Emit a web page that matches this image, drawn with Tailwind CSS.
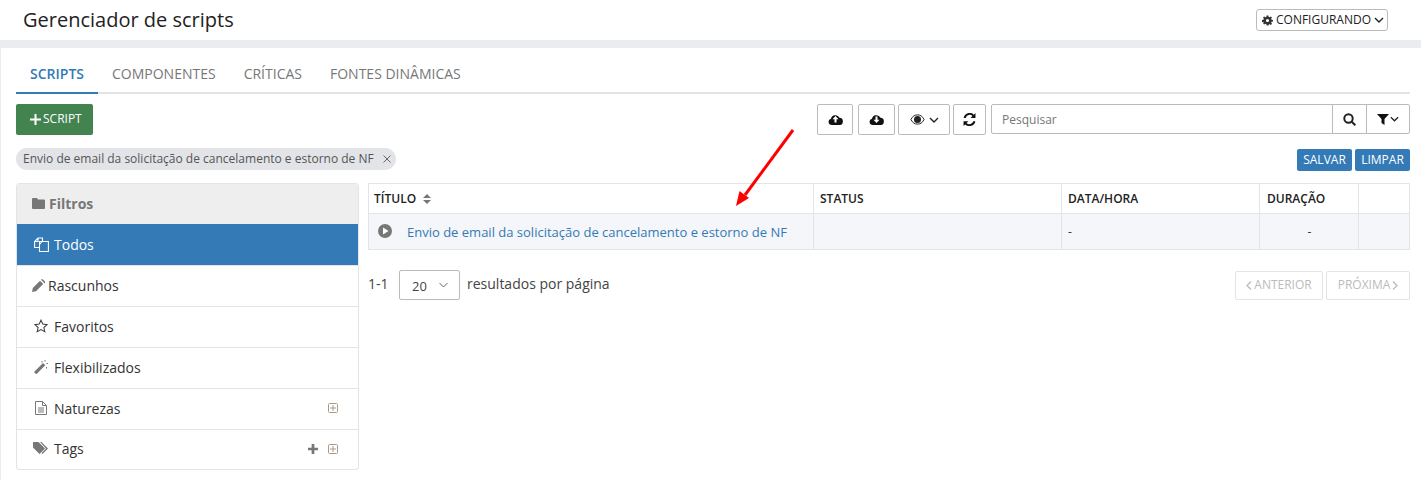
<!DOCTYPE html>
<html lang="en">
  <head>
    <meta charset="UTF-8" />
    <script src="https://cdn.jsdelivr.net/npm/@tailwindcss/browser@4"></script>
    <title>Gerenciador de scripts</title>
  </head>
  <body class="bg-[#ebecf0] font-['Open_Sans',sans-serif] text-[#333]">
    <div class="relative w-[1421px] h-[480px] overflow-hidden">
      <!-- header -->
      <header class="h-[40px] bg-white flex items-center justify-between pl-[23px] pr-[33px]">
        <h1 class="text-[20px] leading-[40px] text-[#222]">Gerenciador de scripts</h1>
        <button class="h-[22px] w-[132px] pl-[5px] flex items-center gap-[3px] border border-[#bbb] rounded-[3px] text-[12px] text-[#222] bg-white">
          <svg class="w-[11px] h-[11px]" viewBox="0 0 24 24" fill="#333"><path d="M10 1h4l.6 3.2 2 .8L19.300 3.200l2.500 2.500L20 8.400l.8 2L24 11v3l-3.200.6-.8 2 1.800 2.700-2.500 2.500-2.700-1.800-2 .8L14 23h-4l-.6-3.200-2-.8-2.700 1.800-2.500-2.500L4 17.600l-.8-2L0 15v-4l3.200-.6.8-2-1.800-2.700 2.500-2.500L7.400 5l2-.8zM12 8.500a3.500 3.500 0 1 0 0 7 3.500 3.500 0 0 0 0-7z" fill-rule="evenodd"/></svg>
          <span>CONFIGURANDO</span>
          <svg class="w-[10px] h-[10px]" viewBox="0 0 10 10" fill="none" stroke="#222" stroke-width="1.400"><path d="M1 3l4 4 4-4"/></svg>
        </button>
      </header>

      <main class="mt-[8px] ml-[1px] h-[432px] bg-white pl-[15px] pr-[11px]">
        <!-- tabs -->
        <nav class="h-[46px] flex border-b-2 border-[#e3e3e8] text-[14px] leading-[52px]">
          <a class="h-[46px] w-[82px] text-center text-[#337ab7] font-semibold border-b-2 border-[#337ab7]">SCRIPTS</a>
          <a class="ml-[14px] text-[#777]">COMPONENTES</a>
          <a class="ml-[28px] text-[#777]">CRÍTICAS</a>
          <a class="ml-[28px] text-[#777]">FONTES DINÂMICAS</a>
        </nav>

        <!-- toolbar -->
        <div class="mt-[10px] h-[31px] flex justify-between">
          <button class="w-[77px] h-[31px] pl-[14px] pb-[1px] bg-[#428350] rounded-[2px] text-white text-[12px] flex items-center gap-[2px]">
            <svg class="w-[11px] h-[11px]" viewBox="0 0 11 11" fill="white"><path d="M4.500 0h2v4.500H11v2H6.500V11h-2V6.500H0v-2h4.500z"/></svg>
            SCRIPT
          </button>
          <div class="flex">
            <button class="w-[36px] h-[31px] pb-[1px] border border-[#bbb] rounded-[2px] flex items-center justify-center">
              <svg class="w-[15px] h-[12px]" viewBox="0 0 14 12"><path d="M3.300 12A3.200 3.200 0 0 1 2.500 5.700 4.500 4.500 0 0 1 11 4.800 3.600 3.600 0 0 1 10.500 12z" fill="#111"/><path d="M7 3l3 3.200H8V9.500H6V6.200H4z" fill="white"/></svg>
            </button>
            <button class="ml-[5px] w-[37px] h-[31px] pb-[1px] border border-[#bbb] rounded-[2px] flex items-center justify-center">
              <svg class="w-[15px] h-[12px]" viewBox="0 0 14 12"><path d="M3.300 12A3.200 3.200 0 0 1 2.500 5.700 4.500 4.500 0 0 1 11 4.800 3.600 3.600 0 0 1 10.500 12z" fill="#111"/><path d="M7 10l3-3.200H8V3.500H6v3.300H4z" fill="white"/></svg>
            </button>
            <button class="ml-[3px] w-[52px] h-[31px] border border-[#bbb] rounded-[2px] flex items-center justify-center gap-[4px]">
              <svg class="w-[15px] h-[11px]" viewBox="0 0 13 10"><path d="M.5 5C2 2 4 .8 6.500.8S11 2 12.500 5C11 8 9 9.200 6.500 9.200S2 8 .5 5z" fill="none" stroke="#222" stroke-width=".9"/><circle cx="6.500" cy="5" r="3.200" fill="#222"/></svg>
              <svg class="w-[10px] h-[8px]" viewBox="0 0 10 8" fill="none" stroke="#222" stroke-width="1.400"><path d="M1 2l4 4 4-4"/></svg>
            </button>
            <button class="ml-[3px] w-[33px] h-[31px] border border-[#bbb] rounded-[2px] flex items-center justify-center">
              <svg class="w-[13px] h-[13px]" viewBox="0 0 12 12" fill="#111"><path d="M11.500 0v4.500H7l1.700-1.700A3.700 3.700 0 0 0 2.500 4.500H.6A5.600 5.600 0 0 1 10 1.500zM.5 12V7.500H5L3.300 9.200a3.700 3.700 0 0 0 6.200-1.700h1.900A5.600 5.600 0 0 1 2 10.500z"/></svg>
            </button>
            <div class="ml-[5px] w-[419px] h-[30px] border border-[#bbb] rounded-[2px] flex">
              <span class="flex-1 pl-[10px] text-[12px] leading-[29px] text-[#777]">Pesquisar</span>
              <span class="w-[34px] border-l border-[#bbb] flex items-center justify-center">
                <svg class="w-[13px] h-[13px]" viewBox="0 0 13 13" fill="none" stroke="#222" stroke-width="2"><circle cx="5.500" cy="5.500" r="4.200"/><path d="M8.500 8.500l3.800 3.800"/></svg>
              </span>
              <span class="w-[43px] border-l border-[#bbb] flex items-center justify-center gap-[1px]">
                <svg class="w-[12px] h-[12px]" viewBox="0 0 12 12" fill="#111"><path d="M0 1h12L7.500 6v6l-3-2V6z"/></svg>
                <svg class="w-[9px] h-[8px]" viewBox="0 0 10 8" fill="none" stroke="#222" stroke-width="1.400"><path d="M1 2l4 4 4-4"/></svg>
              </span>
            </div>
          </div>
        </div>

        <!-- chip and saved filter buttons -->
        <div class="mt-[13px] h-[22px] flex justify-between">
          <span class="h-[22px] w-[380px] rounded-full bg-[#e3e4e8] pl-[7px] flex items-center text-[12px] text-[#555] whitespace-nowrap">
            Envio de email da solicitação de cancelamento e estorno de NF
            <svg class="ml-[9px] w-[8px] h-[8px]" viewBox="0 0 8 8" stroke="#666" stroke-width="1"><path d="M.5.500l7 7M7.500.500l-7 7"/></svg>
          </span>
          <div class="mt-[1px] flex gap-[3px] text-[12px] text-white">
            <button class="w-[55px] h-[22px] bg-[#337ab7] rounded-[2px]">SALVAR</button>
            <button class="w-[55px] h-[22px] bg-[#337ab7] rounded-[2px]">LIMPAR</button>
          </div>
        </div>

        <div class="mt-[13px] flex items-start">
          <!-- filters panel -->
          <aside class="w-[343px] h-[287px] border border-[#e3e3e8] border-t-0 rounded-[4px] overflow-hidden text-[14px] text-[#333]">
            <div class="h-[41px] bg-[#eee] border-t border-[#e3e3e8] pl-[15px] pb-[2px] flex items-center gap-[4px] font-bold text-[#777]">
              <svg class="w-[13px] h-[11px]" viewBox="0 0 13 11" fill="#777"><path d="M1 0h4l1 1.500h6a1 1 0 0 1 1 1V10a1 1 0 0 1-1 1H1a1 1 0 0 1-1-1V1a1 1 0 0 1 1-1z"/></svg>
              Filtros
            </div>
            <div class="h-[42px] bg-[#337ab7] border-b border-[#e3e3e8] pl-[17px] flex items-center gap-[5px] text-white">
              <svg class="w-[15px] h-[15px]" viewBox="0 0 15 15" fill="none" stroke="white" stroke-width="1.100"><path d="M5 10.500H.6V4.500L4 1h4.500v3.500M4 1v3.500H.6M5.500 4.500H10l4.400 0v10H5.500zM8 4.500L5.500 7.500"/></svg>
              Todos
            </div>
            <div class="h-[41px] border-b border-[#e3e3e8] pl-[15px] pb-[2px] flex items-center gap-[3px]">
              <svg class="w-[13px] h-[13px]" viewBox="0 0 13 13" fill="#777"><path d="M0 13l.8-4L8 1.800 11.200 5 4 12.200zM9 .8l.6-.6h1l2.800 2.800v1l-.6.6z"/></svg>
              Rascunhos
            </div>
            <div class="h-[41px] border-b border-[#e3e3e8] pl-[17px] pb-[2px] flex items-center gap-[6px]">
              <svg class="w-[14px] h-[14px]" viewBox="0 0 14 14" fill="none" stroke="#444" stroke-width="1.100"><path d="M7 1.200l1.800 3.900 4.200.5-3.100 2.900.9 4.200L7 10.600l-3.800 2.100.9-4.200L1 5.600l4.200-.5z"/></svg>
              Favoritos
            </div>
            <div class="h-[41px] border-b border-[#e3e3e8] pl-[17px] pb-[2px] flex items-center gap-[6px]">
              <svg class="w-[14px] h-[14px]" viewBox="0 0 14 14" fill="#777"><path d="M0 12l9-9 2.300 2.300-9 9zM10.500 0h1v1.500h-1zM12.500 3h1.500v1h-1.500zM7.500 1h1v1.500h-1zM12 7h1v1.500h-1z"/></svg>
              Flexibilizados
            </div>
            <div class="h-[41px] border-b border-[#e3e3e8] pl-[18px] pr-[20px] pb-[2px] flex items-center gap-[7px]">
              <svg class="w-[12px] h-[14px]" viewBox="0 0 12 14" fill="none" stroke="#777"><path d="M.5.500h7l4 4v9H.5zM7.500.500v4h4M3 7h6M3 9h6M3 11h6"/></svg>
              <span class="flex-1">Naturezas</span>
              <svg class="w-[10px] h-[10px]" viewBox="0 0 10 10" fill="none" stroke="#a98"><rect x=".5" y=".5" width="9" height="9" rx="1"/><path d="M5 2v6M2 5h6"/></svg>
            </div>
            <div class="h-[40px] pl-[16px] pr-[20px] pb-[3px] flex items-center gap-[5px]">
              <svg class="w-[16px] h-[13px]" viewBox="0 0 16 13" fill="#777"><path d="M0 0h5.500L12 6.500 6.500 12 0 5.500zM7 0h1.500L15 6.500 9.500 12 8.500 11l4.500-4.500z"/></svg>
              <span class="flex-1">Tags</span>
              <svg class="mr-[5px] w-[10px] h-[10px]" viewBox="0 0 11 11" fill="#777"><path d="M4 0h3v4h4v3H7v4H4V7H0V4h4z"/></svg>
              <svg class="w-[10px] h-[10px]" viewBox="0 0 10 10" fill="none" stroke="#a98"><rect x=".5" y=".5" width="9" height="9" rx="1"/><path d="M5 2v6M2 5h6"/></svg>
            </div>
          </aside>

          <!-- results -->
          <section class="ml-[9px] w-[1042px] text-[12px]">
            <table class="w-full table-fixed border-collapse">
              <thead>
                <tr class="h-[30px] text-left text-[#222]">
                  <th class="w-[445px] border border-[#e3e3e8] pl-[5px] font-semibold">
                    <span class="inline-flex items-center gap-[7px]">TÍTULO
                      <svg class="w-[8px] h-[10px]" viewBox="0 0 8 10" fill="#777"><path d="M4 0l4 4H0zM4 10L0 6h8z"/></svg>
                    </span>
                  </th>
                  <th class="w-[248px] border border-[#e3e3e8] pl-[6px] font-semibold">STATUS</th>
                  <th class="w-[198px] border border-[#e3e3e8] pl-[6px] font-semibold">DATA/HORA</th>
                  <th class="w-[99px] border border-[#e3e3e8] pl-[7px] font-semibold">DURAÇÃO</th>
                  <th class="border border-[#e3e3e8]"></th>
                </tr>
              </thead>
              <tbody>
                <tr class="h-[36px] bg-[#f5f6f9]">
                  <td class="border border-[#e3e3e8] pl-[9px]">
                    <span class="flex items-center gap-[15px]">
                      <svg class="w-[14px] h-[14px] mb-[2px]" viewBox="0 0 14 14"><circle cx="7" cy="7" r="7" fill="#777"/><path d="M5 3.500L10.500 7 5 10.500z" fill="white"/></svg>
                      <a class="pt-[2px] text-[13px] text-[#337ab7] whitespace-nowrap">Envio de email da solicitação de cancelamento e estorno de NF</a>
                    </span>
                  </td>
                  <td class="border border-[#e3e3e8]"></td>
                  <td class="border border-[#e3e3e8] pl-[6px]">-</td>
                  <td class="border border-[#e3e3e8] pl-[1px] text-center">-</td>
                  <td class="border border-[#e3e3e8]"></td>
                </tr>
              </tbody>
            </table>

            <div class="mt-[20px] flex items-center justify-between">
              <div class="flex items-center text-[14px] text-[#444]">
                <span class="w-[31px] pb-[4px]">1-1</span>
                <span class="w-[61px] h-[30px] border border-[#bbb] rounded-[2px] pl-[12px] flex items-center gap-[12px] text-[13px]">
                  <span class="pt-[3px]">20</span>
                  <svg class="w-[9px] h-[6px]" viewBox="0 0 9 6" fill="none" stroke="#666"><path d="M.5 1l4 4 4-4"/></svg>
                </span>
                <span class="ml-[7px] pb-[4px]">resultados por página</span>
              </div>
              <div class="flex gap-[3px] text-[12px] text-[#bbb]">
                <button class="w-[88px] h-[29px] border border-[#e3e3e8] rounded-[2px] flex items-center justify-center gap-[2px]">
                  <svg class="w-[6px] h-[9px]" viewBox="0 0 6 9" fill="none" stroke="#bbb" stroke-width="1.300"><path d="M5 .5l-4 4 4 4"/></svg>
                  ANTERIOR
                </button>
                <button class="w-[84px] h-[29px] border border-[#e3e3e8] rounded-[2px] flex items-center justify-center gap-[2px]">
                  PRÓXIMA
                  <svg class="w-[6px] h-[9px]" viewBox="0 0 6 9" fill="none" stroke="#bbb" stroke-width="1.300"><path d="M1 .5l4 4-4 4"/></svg>
                </button>
              </div>
            </div>
          </section>
        </div>
      </main>

      <!-- annotation arrow drawn over the page -->
      <svg class="absolute left-[730px] top-[125px] w-[70px] h-[85px]" viewBox="730 125 70 85">
        <path d="M793 130L745 195" stroke="#ff0000" stroke-width="3" fill="none"/>
        <path d="M736 206l3.500-15 9.500 7z" fill="#ff0000"/>
      </svg>
    </div>
  </body>
</html>
